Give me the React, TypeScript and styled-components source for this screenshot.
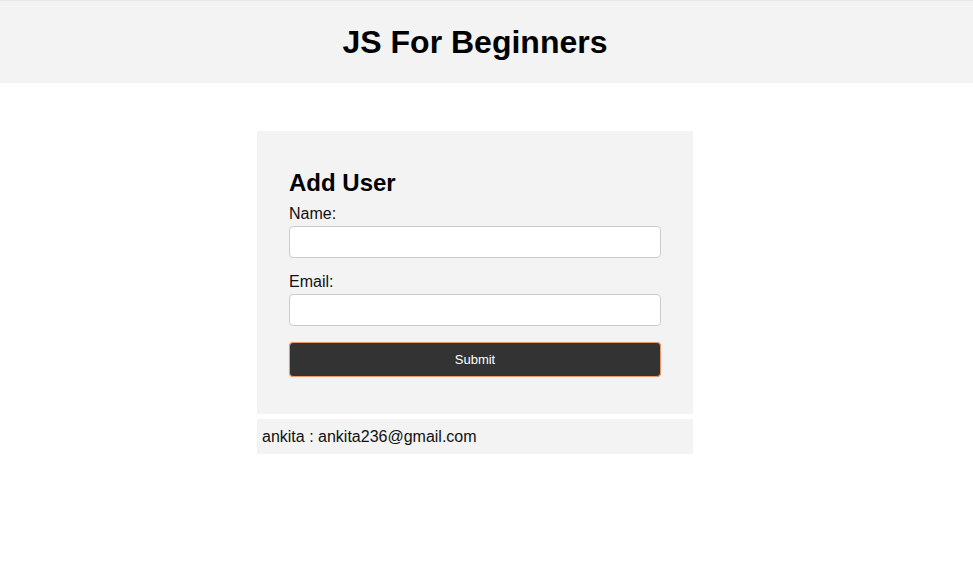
import React from "react";
import styled, { createGlobalStyle } from "styled-components";

const Global = createGlobalStyle`
  html, body { margin: 0; padding: 0; background: #fff; }
  body { font-family: "Liberation Sans", Arial, sans-serif; color: #000; }
`;

const Header = styled.header`
  background: #f3f3f3;
  border-top: 1px solid #e8e8e8;
  height: 82px;
  display: flex;
  align-items: center;
  justify-content: center;
  padding-right: 23px;
`;

const Title = styled.h1`
  margin: 0;
  font-size: 32px;
  font-weight: bold;
`;

const Main = styled.main`
  width: 950px;
  display: flex;
  flex-direction: column;
  align-items: center;
  padding-top: 48px;
`;

const Card = styled.form`
  width: 436px;
  box-sizing: border-box;
  background: #f3f3f3;
  padding: 38px 32px 37px;
  display: flex;
  flex-direction: column;
`;

const Heading = styled.h2`
  margin: 0;
  font-size: 24px;
  line-height: 28px;
  font-weight: bold;
`;

const Label = styled.label<{ $first?: boolean }>`
  font-size: 16px;
  line-height: 18px;
  color: #111;
  margin-top: ${(p) => (p.$first ? "8px" : "15px")};
  margin-bottom: 3px;
`;

const Input = styled.input`
  height: 32px;
  box-sizing: border-box;
  border: 1px solid #ccc;
  border-radius: 4px;
  background: #fff;
  padding: 0 8px;
  font-size: 16px;
`;

const Button = styled.button`
  margin-top: 16px;
  height: 35px;
  box-sizing: border-box;
  background: #333;
  color: #fff;
  border: 1px solid #eb9a6c;
  border-radius: 4px;
  box-shadow: 0 0 1px #f2b894;
  font-family: "Liberation Sans", Arial, sans-serif;
  font-size: 13px;
`;

const List = styled.ul`
  list-style: none;
  margin: 5px 0 0;
  padding: 0;
  width: 436px;
`;

const Item = styled.li`
  background: #f3f3f3;
  height: 35px;
  display: flex;
  align-items: center;
  padding: 0 5px;
  font-size: 16px;
  color: #111;
`;

export default function App() {
  return (
    <>
      <Global />
      <Header>
        <Title>JS For Beginners</Title>
      </Header>
      <Main>
        <Card onSubmit={(e) => e.preventDefault()}>
          <Heading>Add User</Heading>
          <Label $first htmlFor="name">Name:</Label>
          <Input id="name" type="text" />
          <Label htmlFor="email">Email:</Label>
          <Input id="email" type="email" />
          <Button type="submit">Submit</Button>
        </Card>
        <List>
          <Item>ankita : ankita236@gmail.com</Item>
        </List>
      </Main>
    </>
  );
}
